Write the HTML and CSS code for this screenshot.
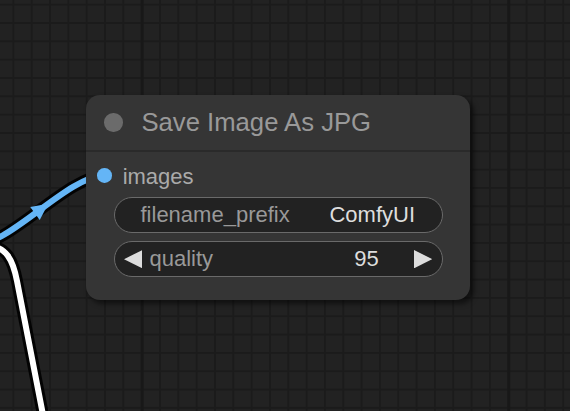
FILE: index.html
```html
<!DOCTYPE html>
<html>
<head>
<meta charset="utf-8">
<title>Save Image As JPG</title>
<link rel="stylesheet" href="styles.css">
</head>
<body>
<div class="canvas">
  <svg class="links" width="570" height="411" viewBox="0 0 570 411">
    <path class="link-border" d="M -12 246 C 6 246, 13 260, 17 281 L 44 420"/>
    <path class="link-white" d="M -12 246 C 6 246, 13 260, 17 281 L 44 420"/>
    <path class="link-border" d="M -26.3 245.3 C 10.7 245.3, 67.3 175.7, 104.3 175.7"/>
    <path class="link-blue" d="M -26.3 245.3 C 10.7 245.3, 67.3 175.7, 104.3 175.7"/>
    <polygon class="link-arrow" points="11.5,0 -5,-8 -5,8" transform="translate(39 210.5) rotate(-36.5)"/>
  </svg>
  <div class="node">
    <div class="node-title">
      <span class="title-dot"></span>
      <span class="title-text">Save Image As JPG</span>
    </div>
    <div class="slot-row">
      <span class="slot-dot"></span>
      <span class="slot-label">images</span>
    </div>
    <div class="widget text-widget">
      <span class="w-label">filename_prefix</span>
      <span class="w-value">ComfyUI</span>
    </div>
    <div class="widget number-widget">
      <svg class="w-arrow" viewBox="0 0 10 10"><polygon points="10,0 0,5 10,10"/></svg>
      <span class="w-label grow">quality</span>
      <span class="w-value num">95</span>
      <svg class="w-arrow" viewBox="0 0 10 10"><polygon points="0,0 10,5 0,10"/></svg>
    </div>
  </div>
</div>
</body>
</html>
```
FILE: styles.css
```css
html, body {
  margin: 0;
  padding: 0;
  background: #222222;
}

.canvas {
  position: relative;
  width: 570px;
  height: 411px;
  overflow: hidden;
  background-color: #222222;
  background-image:
    linear-gradient(to right, #181818 0, #181818 3px, transparent 3px),
    linear-gradient(to right, #1b1b1b 0, #1b1b1b 2px, transparent 2px),
    linear-gradient(to bottom, #1b1b1b 0, #1b1b1b 2px, transparent 2px);
  background-size: 366.67px 100%, 18.333px 100%, 100% 18.333px;
  background-position: 140.7px 0, 12.4px 0, 0 3.7px;
  font-family: "Liberation Sans", Arial, sans-serif;
}

.links {
  position: absolute;
  left: 0;
  top: 0;
}

.link-border {
  fill: none;
  stroke: #000000;
  stroke-opacity: 0.9;
  stroke-width: 12;
}

.link-white {
  fill: none;
  stroke: #ffffff;
  stroke-width: 6;
}

.link-blue {
  fill: none;
  stroke: #64b5f6;
  stroke-width: 6;
}

.link-arrow {
  fill: #64b5f6;
}

.node {
  position: absolute;
  left: 86px;
  top: 95px;
  width: 384px;
  height: 205px;
  background: #353535;
  border-radius: 14px;
  box-shadow: 3.7px 3.7px 5.5px rgba(0, 0, 0, 0.5);
  display: flex;
  flex-direction: column;
}

.node-title {
  height: 55px;
  border-bottom: 2px solid #2a2a2a;
  display: flex;
  align-items: center;
  padding-left: 18.33px;
  gap: 18.83px;
}

.title-dot {
  width: 18.33px;
  height: 18.33px;
  border-radius: 50%;
  background: #6b6b6b;
  flex-shrink: 0;
}

.title-text {
  font-size: 25.67px;
  line-height: 55px;
  color: #999999;
  white-space: nowrap;
}

.slot-row {
  margin-top: 7px;
  height: 36.67px;
  display: flex;
  align-items: flex-start;
  padding-left: 10.97px;
  gap: 11px;
}

.slot-dot {
  width: 14.67px;
  height: 14.67px;
  border-radius: 50%;
  background: #64b5f6;
  margin-top: 9.4px;
  flex-shrink: 0;
}

.slot-label {
  font-size: 22px;
  line-height: 36.67px;
  color: #aaaaaa;
}

.widget {
  box-sizing: border-box;
  height: 36.67px;
  margin: 0 27.5px;
  border: 1.6px solid #6a6a6a;
  border-radius: 18.33px;
  background: #222222;
  display: flex;
  align-items: center;
  font-size: 22px;
  line-height: 33.5px;
  white-space: nowrap;
}

.text-widget {
  margin-top: 1.13px;
  padding: 0 26.5px 0 26px;
  justify-content: space-between;
}

.number-widget {
  margin-top: 7.33px;
  padding: 0 9.5px;
}

.w-label {
  color: #999999;
}

.w-value {
  color: #dddddd;
}

.grow {
  flex: 1;
  margin-left: 7.2px;
}

.num {
  margin-right: 34.9px;
}

.w-arrow {
  width: 18.33px;
  height: 18.33px;
  flex-shrink: 0;
  fill: #dddddd;
}
```
